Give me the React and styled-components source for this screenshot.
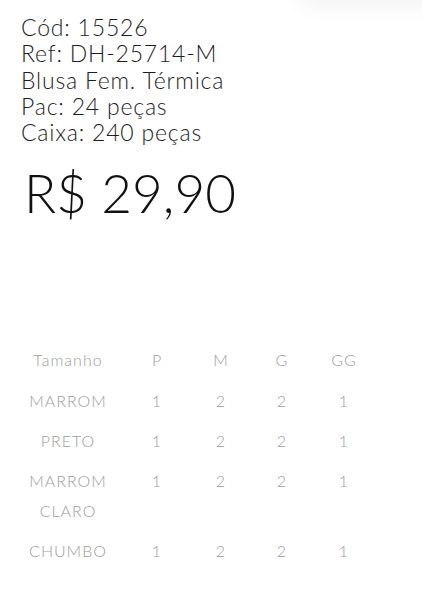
import React from 'react';
import styled, { createGlobalStyle } from 'styled-components';

const GlobalStyle = createGlobalStyle`
    body {
        margin: 0;
        background: #fff;
        font-family: Lato, "Liberation Sans", sans-serif;
    }
`;

const Page = styled.div`
    position: relative;
    width: 422px;
    height: 599px;
    overflow: hidden;
    background: #fff;
`;

const TopShadow = styled.div`
    position: absolute;
    top: -60px;
    left: 300px;
    width: 260px;
    height: 60px;
    border-radius: 8px;
    box-shadow: 0 4px 24px rgba(0, 0, 0, 0.06);
`;

const Info = styled.div`
    padding: 14px 0 0 21px;
    font-size: 23px;
    font-weight: 300;
    line-height: 26.3px;
    color: #1e1e1e;
    letter-spacing: 0.8px;
`;

const Price = styled.div`
    margin: 16px 0 0 24px;
    font-size: 53px;
    font-weight: 300;
    line-height: 64px;
    color: #111;
`;

const Table = styled.div`
    display: grid;
    grid-template-columns: 96px 82px 46px 76px 48px;
    margin: 120px 0 0 20px;
    font-size: 16px;
    font-weight: 300;
    color: #9c9c9c;
    letter-spacing: 1px;
    text-align: center;
`;

const Cell = styled.div`
    padding: ${p => (p.$head ? '0 0 6px' : '5px 0')};
    line-height: 30px;
`;

const sizes = ['P', 'M', 'G', 'GG'];

const rows = [
    { cor: ['MARROM'], qtd: [1, 2, 2, 1] },
    { cor: ['PRETO'], qtd: [1, 2, 2, 1] },
    { cor: ['MARROM', 'CLARO'], qtd: [1, 2, 2, 1] },
    { cor: ['CHUMBO'], qtd: [1, 2, 2, 1] },
];

const App = () => {
    return (
        <Page>
            <GlobalStyle />
            <TopShadow />
            <Info>
                <div>Cód: 15526</div>
                <div>Ref: DH-25714-M</div>
                <div>Blusa Fem. Térmica</div>
                <div>Pac: 24 peças</div>
                <div>Caixa: 240 peças</div>
            </Info>

            <Price>R$ 29,90</Price>

            <Table>
                <Cell $head>Tamanho</Cell>
                {sizes.map(s => <Cell $head key={s}>{s}</Cell>)}
                {rows.map((r, i) => (
                    <React.Fragment key={i}>
                        <Cell>{r.cor.map((c, j) => <div key={j}>{c}</div>)}</Cell>
                        {r.qtd.map((q, j) => <Cell key={j}>{q}</Cell>)}
                    </React.Fragment>
                ))}
            </Table>
        </Page>
    );
};

export default App;
